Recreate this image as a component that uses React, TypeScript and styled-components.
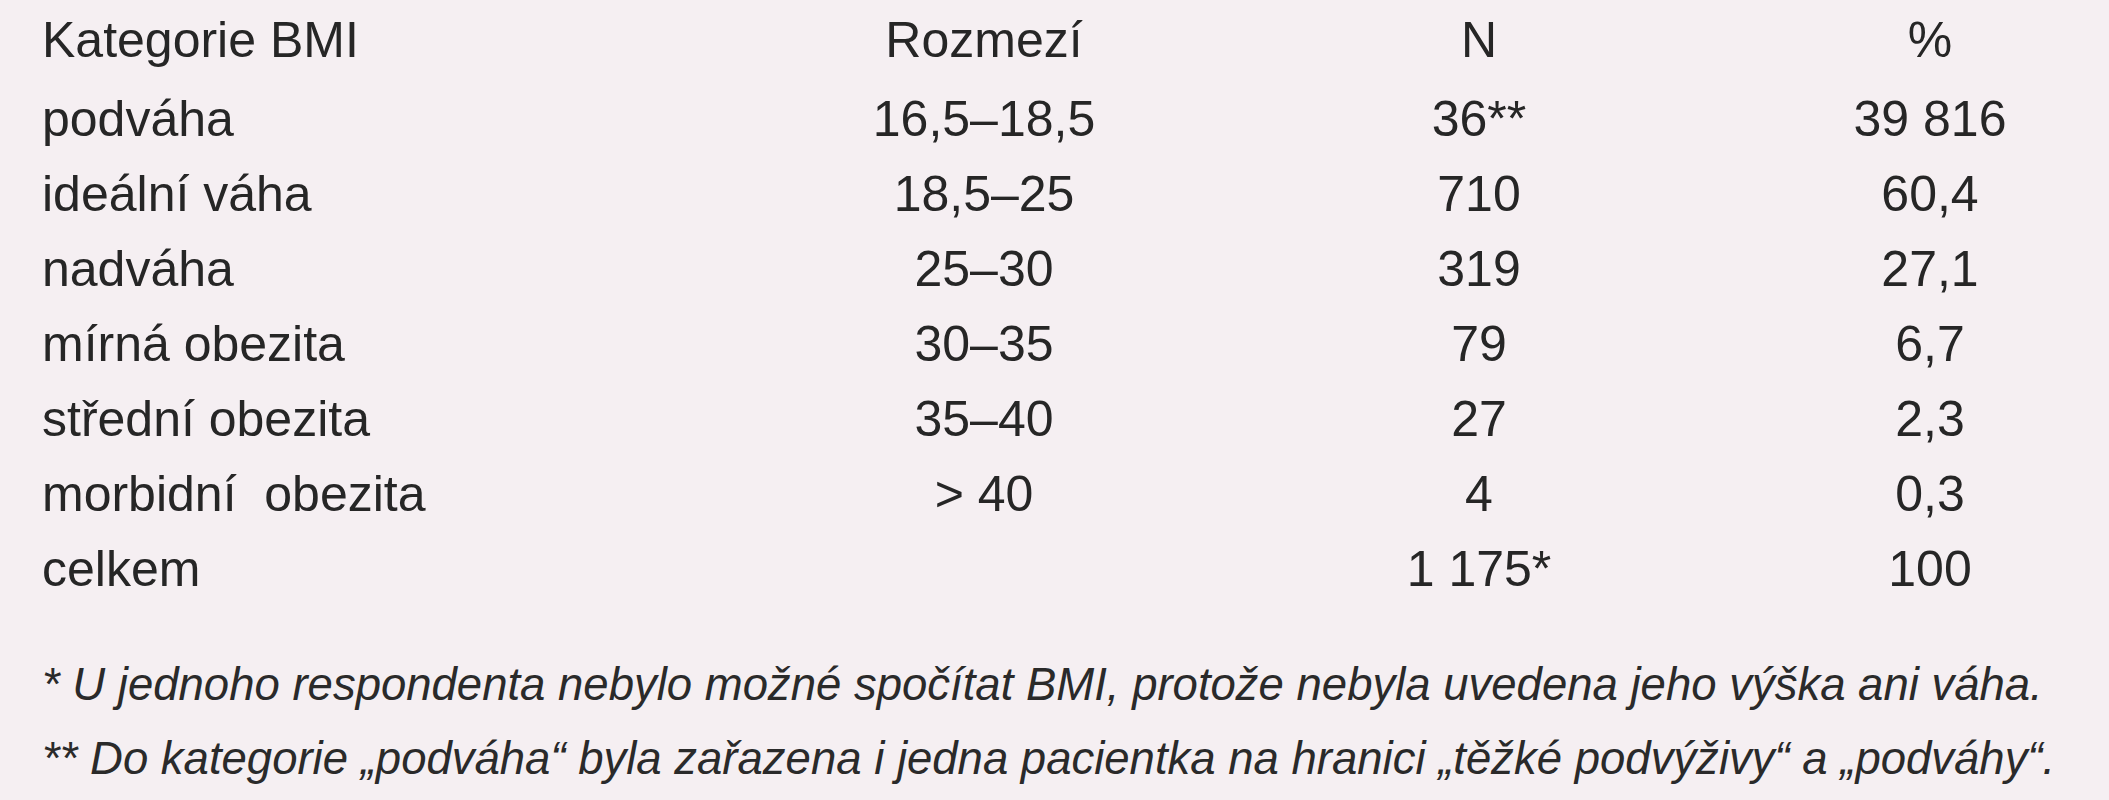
import React from "react";
import styled, { createGlobalStyle } from "styled-components";

const GlobalStyle = createGlobalStyle`
  html, body {
    margin: 0;
    padding: 0;
    background: #f5eff2;
    overflow: hidden;
  }
`;

const Page = styled.div`
  width: 2109px;
  height: 800px;
  padding: 3px 0 0 42px;
  box-sizing: border-box;
  background: #f5eff2;
  color: #262626;
  font-family: "Liberation Sans", Arial, sans-serif;
`;

const Table = styled.div`
  display: grid;
  grid-template-columns: 698px 488px 502px 400px;
  grid-template-rows: 79px;
  grid-auto-rows: 75px;
  font-size: 50px;
  line-height: 75px;
`;

const Cell = styled.div<{ $align?: "left" | "center" }>`
  text-align: ${(p) => p.$align ?? "center"};
  white-space: pre;
`;

const Notes = styled.div`
  margin-top: 41px;
  font-size: 45.5px;
  line-height: 74px;
  font-style: italic;
  color: #2a2a2a;
  white-space: nowrap;
`;

const rows: [string, string, string, string][] = [
  ["Kategorie BMI", "Rozmezí", "N", "%"],
  ["podváha", "16,5–18,5", "36**", "39 816"],
  ["ideální váha", "18,5–25", "710", "60,4"],
  ["nadváha", "25–30", "319", "27,1"],
  ["mírná obezita", "30–35", "79", "6,7"],
  ["střední obezita", "35–40", "27", "2,3"],
  ["morbidní  obezita", "> 40", "4", "0,3"],
  ["celkem", "", "1 175*", "100"],
];

export default function App() {
  return (
    <>
      <GlobalStyle />
      <Page>
        <Table>
          {rows.map((r, i) => (
            <React.Fragment key={i}>
              <Cell $align="left">{r[0]}</Cell>
              <Cell>{r[1]}</Cell>
              <Cell>{r[2]}</Cell>
              <Cell>{r[3]}</Cell>
            </React.Fragment>
          ))}
        </Table>
        <Notes>
          <div>* U jednoho respondenta nebylo možné spočítat BMI, protože nebyla uvedena jeho výška ani váha.</div>
          <div>** Do kategorie „podváha“ byla zařazena i jedna pacientka na hranici „těžké podvýživy“ a „podváhy“.</div>
        </Notes>
      </Page>
    </>
  );
}
